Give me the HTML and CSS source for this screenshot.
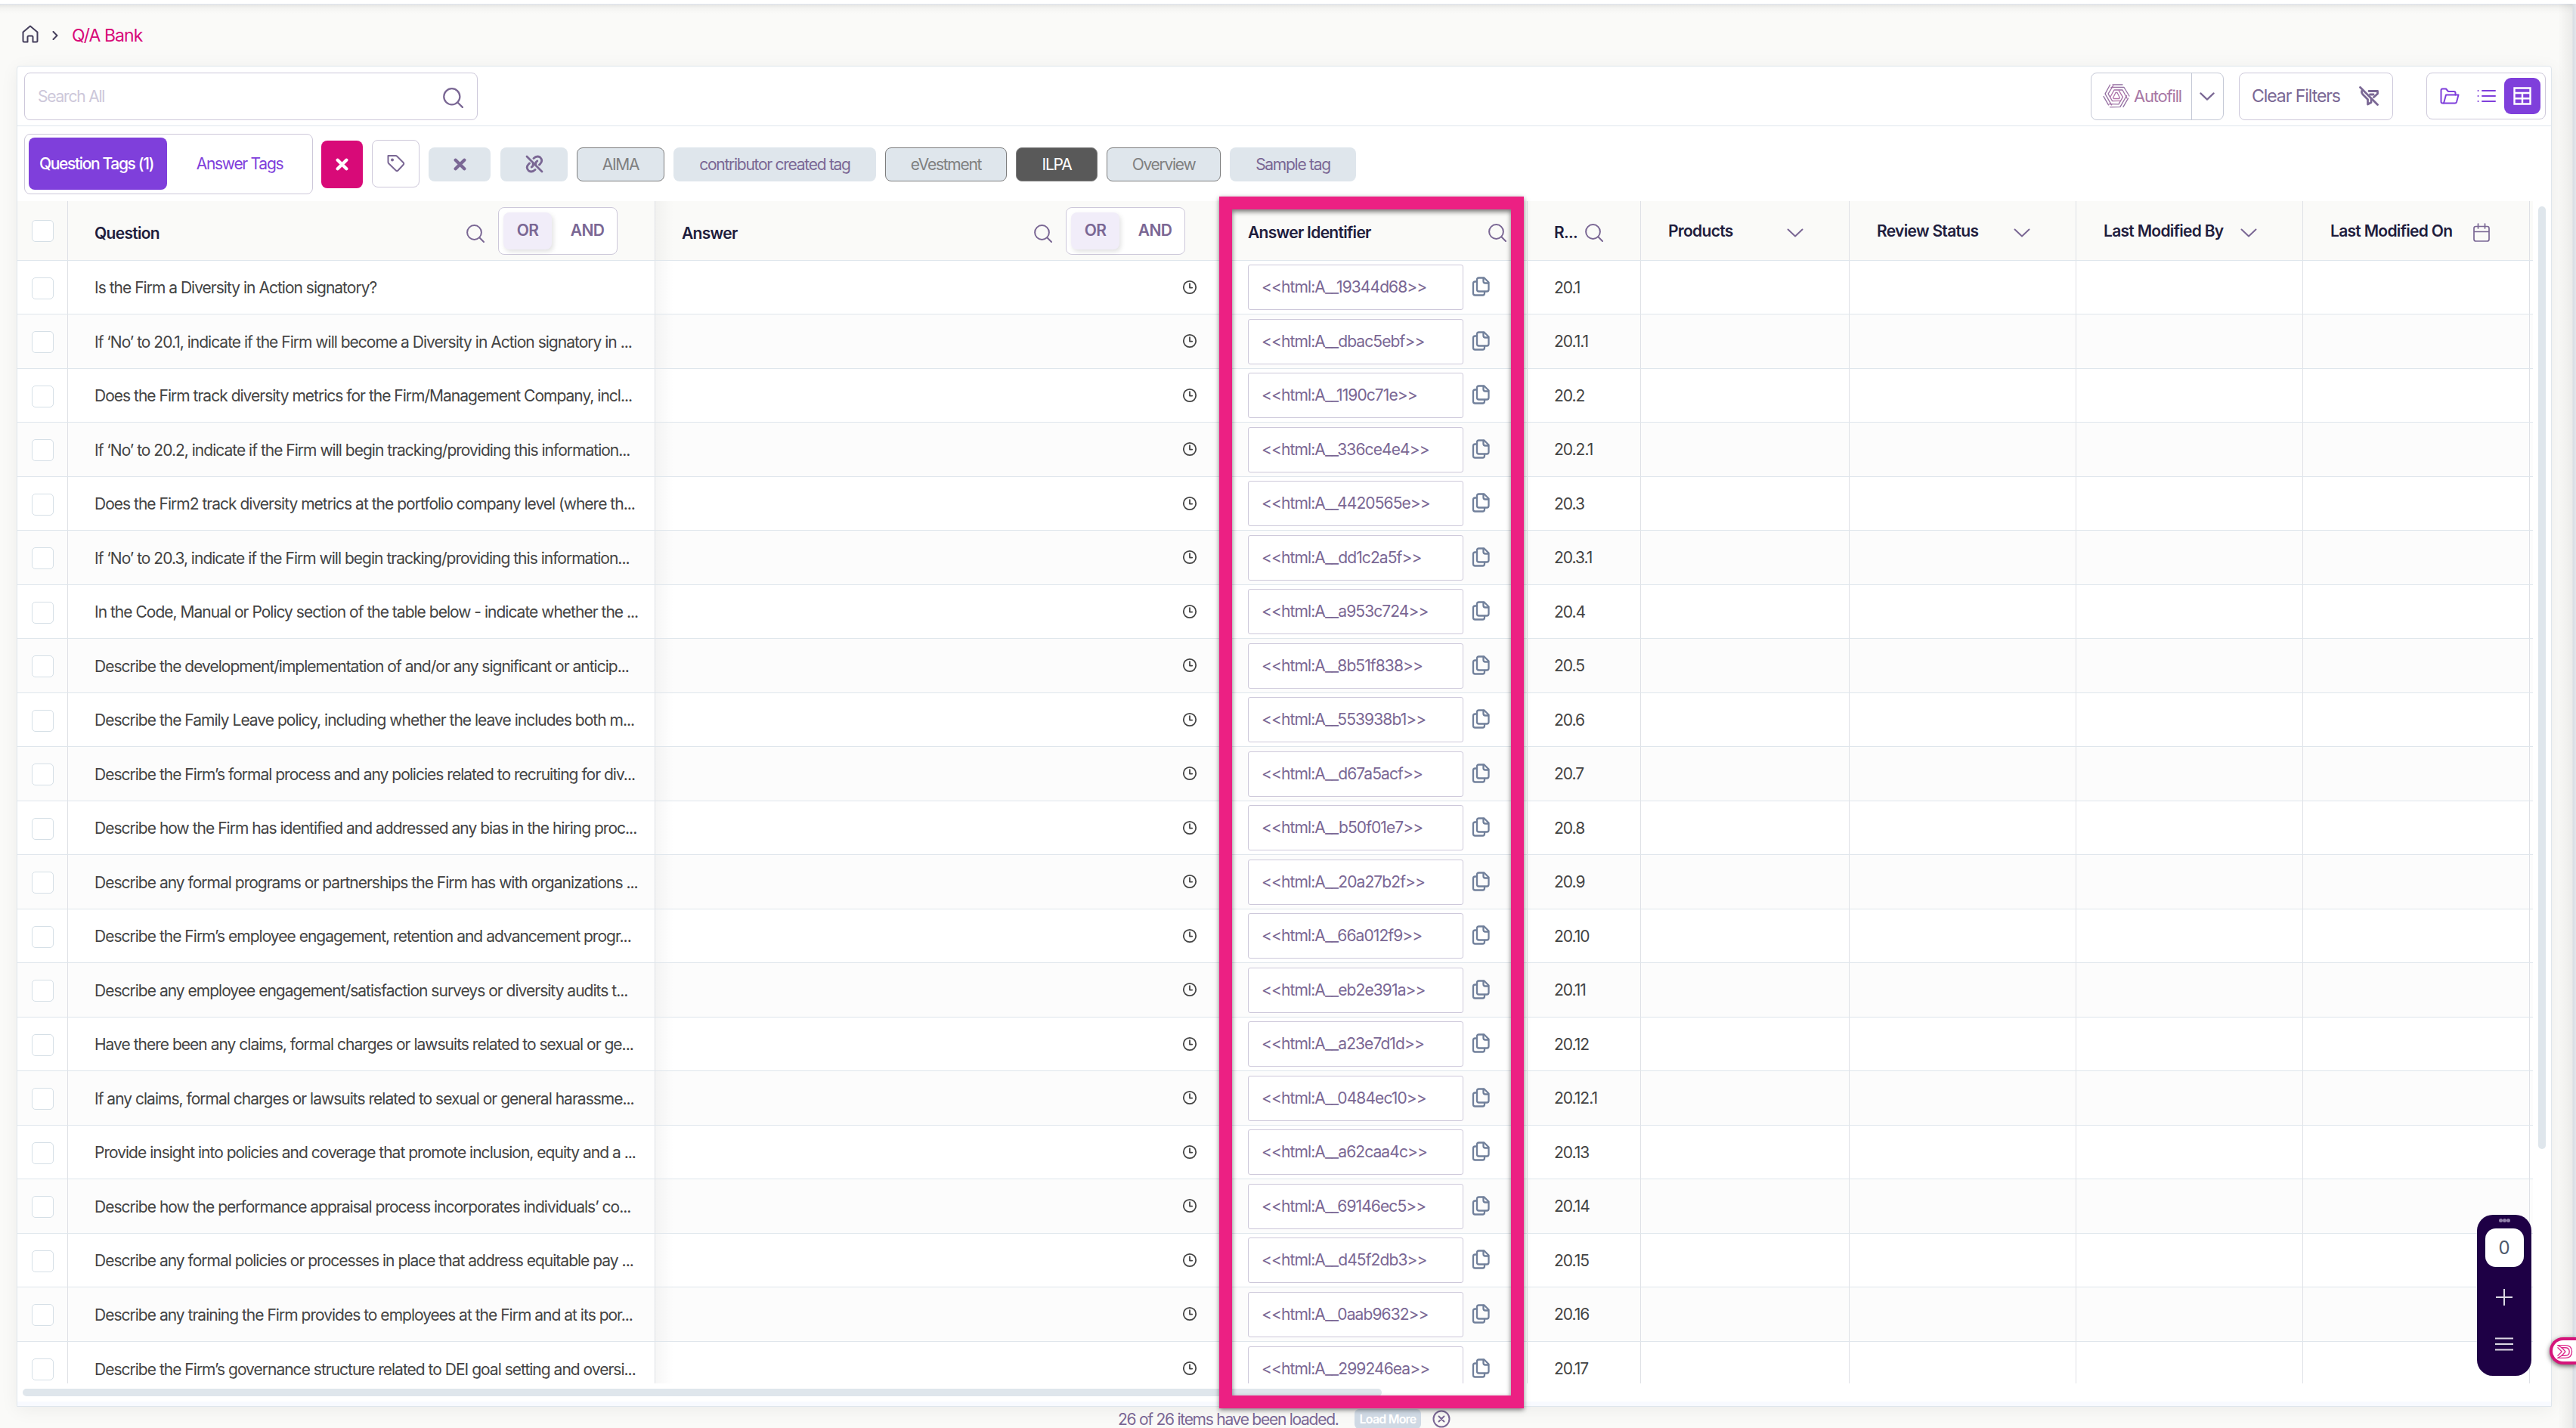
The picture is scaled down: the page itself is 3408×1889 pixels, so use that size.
FILE: index.html
```
<!DOCTYPE html>
<html lang="en">
<head>
  <meta charset="UTF-8" />
  <meta name="viewport" content="width=device-width, initial-scale=1.0"/>
  <title>Q/A Bank</title>
  <link rel="stylesheet" href="styles.css">
</head>
<body>
  <svg class="defs" width="0" height="0">
    <symbol id="search" viewBox="0 0 24 24"><circle cx="10.5" cy="10.5" r="9.4"/><path d="M17.3 17.3 L23 23"/></symbol>
    <symbol id="chevron" viewBox="0 0 22 12"><path d="M1.5 1.5 L11 10.5 L20.5 1.5"/></symbol>
    <symbol id="clock" viewBox="0 0 20 20"><circle cx="10" cy="10" r="8.2"/><path d="M10 5.2 V10.6 H13.2"/></symbol>
    <symbol id="copy" viewBox="0 0 24 26"><path d="M9.5 1.5 H16.5 L22.5 7.5 V17 Q22.5 19.5 20 19.5 H9.5 Q7 19.5 7 17 V4 Q7 1.5 9.5 1.5 Z"/><path d="M15.5 2 V6 Q15.5 8.5 18 8.5 H22"/><path d="M6.5 6.5 H4.5 Q2 6.5 2 9 V22 Q2 24.5 4.5 24.5 H14.5 Q17 24.5 17 22 V20"/></symbol>
  </svg>

  <nav class="breadcrumb">
    <svg class="home" viewBox="0 0 22 24"><path d="M1.5 9.5 L11 1.5 L20.5 9.5 V21 Q20.5 22.5 19 22.5 H14.5 V16 Q14.5 14.5 13 14.5 H9 Q7.5 14.5 7.5 16 V22.5 H3 Q1.5 22.5 1.5 21 Z"/></svg>
    <svg class="sep" viewBox="0 0 8 12"><path d="M1.5 1 L6.5 6 L1.5 11"/></svg>
    <span>Q/A Bank</span>
  </nav>

  <main class="panel">
    <div class="toolbar">
      <div class="search-box"><span>Search All</span><svg class="icon-search big"><use href="#search"/></svg></div>
      <div class="autofill">
        <div class="autofill-main">
          <svg class="spiral" viewBox="-18 -16 36 32">
            <defs>
              <linearGradient id="fade" gradientUnits="userSpaceOnUse" x1="-10" y1="15" x2="10" y2="-15"><stop offset="0" stop-color="#d274b2"/><stop offset="1" stop-color="#8a6f9f"/></linearGradient>
            </defs>
            <g stroke="url(#fade)">
              <path d="M-5 -15 H8 M-7 -11.5 H10 L17 0 M-8 1 L-3 -8 H8 L14 3"/>
              <path transform="rotate(120)" d="M-5 -15 H8 M-7 -11.5 H10 L17 0 M-8 1 L-3 -8 H8 L14 3"/>
              <path transform="rotate(240)" d="M-5 -15 H8 M-7 -11.5 H10 L17 0 M-8 1 L-3 -8 H8 L14 3"/>
              <path d="M-1 -4.5 H1 L4.5 2.5 L3.5 3.5 H-3.5 L-4.5 2.5 Z"/>
            </g>
          </svg>
          <span>Autofill</span>
        </div>
        <div class="autofill-more"><svg class="icon-chevron small"><use href="#chevron"/></svg></div>
      </div>
      <div class="clear-filters">
        <span>Clear Filters</span>
        <svg viewBox="0 0 26 26"><path d="M3.5 6.5 Q3 9 5 11 L11.5 17.5 V24 L16 21.5 V17"/><path d="M13 6.5 H24.5 V10 L19.5 14.500"/><path d="M14.500 11 H19"/><path d="M1.500 1.500 L24.500 24.500"/></svg>
      </div>
      <div class="views">
        <div class="view"><svg viewBox="0 0 26 22"><path d="M5 20.500 H3.500 Q1.500 20.500 1.500 18.500 V3.500 Q1.500 1.500 3.500 1.500 H8 L11 5 H18.500 Q20.500 5 20.500 7 V9.500"/><path d="M8 9.500 H24.500 L22 19 Q21.500 20.500 20 20.500 H5 Z"/></svg></div>
        <div class="view"><svg viewBox="0 0 26 22"><path d="M8 4 H25 M8 11 H25 M8 18 H25"/><path d="M2.500 4 H2.600 M2.500 11 H2.600 M2.500 18 H2.600"/></svg></div>
        <div class="view active"><svg viewBox="0 0 24 24"><path d="M1.500 1.500 H22.500 V22.500 H1.500 Z M1.500 8 H22.500 M1.500 15.200 H22.500 M12 8 V22"/></svg></div>
      </div>
    </div>

    <div class="tags">
      <div class="tag-tabs"><div class="tab on">Question Tags (1)</div><div class="tab">Answer Tags</div></div>
      <div class="clear-tags"><svg viewBox="0 0 16 16"><path d="M2.500 2.500 L13.500 13.500 M13.500 2.500 L2.500 13.500"/></svg></div>
      <div class="tag-button"><svg viewBox="0 0 24 24"><path d="M1.500 2 H11.500 Q12.500 2 13.500 3 L21.500 11 Q23 12.500 21.500 14 L14.500 21.500 Q13.200 22.800 11.800 21.500 L2.500 12.500 Q1.500 11.500 1.500 10.500 Z"/><circle cx="7" cy="7.500" r="1"/></svg></div>
      <div class="tag tag-x"><svg viewBox="0 0 16 16"><path d="M2.500 2.500 L13.500 13.500 M13.500 2.500 L2.500 13.500"/></svg></div>
      <div class="tag tag-unlink"><svg viewBox="0 0 24 24"><path d="M2 2 L22 22"/><path d="M11 4.500 Q15 0.500 19.500 3 Q24 7.500 19.500 12 L18.500 13"/><path d="M15.800 8 Q13 9.500 13.800 12.500"/><path d="M13 19.500 Q9 23.500 4.500 21 Q0 16.500 4.500 12 L5.500 11"/><path d="M8.200 16 Q11 14.500 10.200 11.500"/></svg></div>
      <div class="tag outlined aima">AIMA</div>
      <div class="tag contributor">contributor created tag</div>
      <div class="tag outlined evestment">eVestment</div>
      <div class="tag outlined selected">ILPA</div>
      <div class="tag outlined overview">Overview</div>
      <div class="tag sample">Sample tag</div>
    </div>

    <div class="table-area">
      <div class="table" id="table">
        <div class="row head">
          <div class="cell check"><i></i></div>
          <div class="cell question"><span>Question</span><svg class="icon-search"><use href="#search"/></svg><div class="toggle"><b class="on">OR</b><b>AND</b></div></div>
          <div class="cell answer"><span>Answer</span><svg class="icon-search"><use href="#search"/></svg><div class="toggle"><b class="on">OR</b><b>AND</b></div></div>
          <div class="cell identifier"><span>Answer Identifier</span><svg class="icon-search"><use href="#search"/></svg></div>
          <div class="cell ref"><span>R...</span><svg class="icon-search"><use href="#search"/></svg></div>
          <div class="cell filter"><span>Products</span><svg class="icon-chevron"><use href="#chevron"/></svg></div>
          <div class="cell filter"><span>Review Status</span><svg class="icon-chevron"><use href="#chevron"/></svg></div>
          <div class="cell filter"><span>Last Modified By</span><svg class="icon-chevron"><use href="#chevron"/></svg></div>
          <div class="cell filter date"><span>Last Modified On</span><svg class="calendar" viewBox="0 0 22 26"><path d="M3.500 4.500 H18.500 Q21 4.500 21 7 V21.500 Q21 24 18.500 24 H3.500 Q1 24 1 21.500 V7 Q1 4.500 3.500 4.500 Z M1 11.500 H21 M6.500 1 V7 M15.500 1 V7"/></svg></div>
          <div class="cell"></div>
        </div>
      </div>
      <div class="v-scroll"></div>
    </div>
    <div class="h-scroll"></div>
    <div class="panel-foot"></div>
  </main>

  <footer class="loaded">
    <span>26 of 26 items have been loaded.</span>
    <div class="load-more">Load More</div>
    <svg viewBox="0 0 24 24"><circle cx="12" cy="12" r="10.500"/><path d="M8.500 8.500 L15.500 15.500 M15.500 8.500 L8.500 15.500"/></svg>
  </footer>

  <div class="highlight"></div>
  <div class="page-edge"></div>

  <div class="dock">
    <div class="dots"><i></i><i></i><i></i></div>
    <div class="count">0</div>
    <svg class="plus" viewBox="0 0 22 22"><path d="M0 11 H22 M11 0 V22"/></svg>
    <svg class="menu" viewBox="0 0 26 18"><path d="M1 1.500 H25 M1 9 H25 M1 16.500 H25"/></svg>
  </div>
  <div class="side-tab"><svg viewBox="0 0 22 20"><path d="M1 1.200 H11 Q20.500 1.200 20.500 10 Q20.500 18.800 11 18.800 H1"/><path d="M6 4.500 H11 Q17 4.500 17 10 Q17 15.500 11 15.500 H6"/><path d="M1 1.200 L6.500 4.500 L11.500 10 L6.500 15.500 L1 18.800"/><path d="M1 4.500 L6.500 10 L1 15.500"/></svg></div>

  <script>
    const rows = [
      ["Is the Firm a Diversity in Action signatory?", "19344d68", "20.1"],
      ["If ‘No’ to 20.1, indicate if the Firm will become a Diversity in Action signatory in ...", "dbac5ebf", "20.1.1"],
      ["Does the Firm track diversity metrics for the Firm/Management Company, incl...", "1190c71e", "20.2"],
      ["If ‘No’ to 20.2, indicate if the Firm will begin tracking/providing this information...", "336ce4e4", "20.2.1"],
      ["Does the Firm2 track diversity metrics at the portfolio company level (where th...", "4420565e", "20.3"],
      ["If ‘No’ to 20.3, indicate if the Firm will begin tracking/providing this information...", "dd1c2a5f", "20.3.1"],
      ["In the Code, Manual or Policy section of the table below - indicate whether the ...", "a953c724", "20.4"],
      ["Describe the development/implementation of and/or any significant or anticip...", "8b51f838", "20.5"],
      ["Describe the Family Leave policy, including whether the leave includes both m...", "553938b1", "20.6"],
      ["Describe the Firm’s formal process and any policies related to recruiting for div...", "d67a5acf", "20.7"],
      ["Describe how the Firm has identified and addressed any bias in the hiring proc...", "b50f01e7", "20.8"],
      ["Describe any formal programs or partnerships the Firm has with organizations ...", "20a27b2f", "20.9"],
      ["Describe the Firm’s employee engagement, retention and advancement progr...", "66a012f9", "20.10"],
      ["Describe any employee engagement/satisfaction surveys or diversity audits t...", "eb2e391a", "20.11"],
      ["Have there been any claims, formal charges or lawsuits related to sexual or ge...", "a23e7d1d", "20.12"],
      ["If any claims, formal charges or lawsuits related to sexual or general harassme...", "0484ec10", "20.12.1"],
      ["Provide insight into policies and coverage that promote inclusion, equity and a ...", "a62caa4c", "20.13"],
      ["Describe how the performance appraisal process incorporates individuals’ co...", "69146ec5", "20.14"],
      ["Describe any formal policies or processes in place that address equitable pay ...", "d45f2db3", "20.15"],
      ["Describe any training the Firm provides to employees at the Firm and at its por...", "0aab9632", "20.16"],
      ["Describe the Firm’s governance structure related to DEI goal setting and oversi...", "299246ea", "20.17"]
    ];

    const table = document.getElementById("table");
    rows.forEach(([question, id, ref]) => {
      const row = document.createElement("div");
      row.className = "row";
      row.innerHTML = `
        <div class="cell check"><i></i></div>
        <div class="cell question"><span>${question}</span></div>
        <div class="cell answer"><svg class="icon-clock"><use href="#clock"/></svg></div>
        <div class="cell identifier"><div class="code">&lt;&lt;html:A__${id}&gt;&gt;</div><svg class="icon-copy"><use href="#copy"/></svg></div>
        <div class="cell ref">${ref}</div>
        <div class="cell"></div><div class="cell"></div><div class="cell"></div><div class="cell"></div><div class="cell"></div>`;
      table.appendChild(row);
    });
  </script>
</body>
</html>
```
FILE: styles.css
```
* {
  box-sizing: border-box;
}
body {
  margin: 0;
  height: 1889px;
  overflow: hidden;
  position: relative;
  display: flex;
  flex-direction: column;
  background: linear-gradient(#fff 0 5px, #dfe4ee 5px 6px, #e6e6e4 6px, #f4f4f2 11px, #fafaf8 18px);
  color: #444;
  font-family: Inter, "Liberation Sans", sans-serif;
  font-size: 21px;
  letter-spacing: -0.99px;
  font-variant-ligatures: none;
  white-space: nowrap;
}
svg {
  display: block;
  flex: none;
  fill: none;
  stroke: #7a6794;
  stroke-width: 2;
  stroke-linecap: round;
  stroke-linejoin: round;
}
.defs {
  position: absolute;
}
.breadcrumb {
  display: flex;
  align-items: center;
  height: 87px;
  padding: 7px 0 0 29px;
  color: #d80a78;
  font-size: 23px;
  letter-spacing: -0.95px;
}
.home {
  width: 22px;
  height: 24px;
  margin: 0 18px 3px 0;
  stroke: #453f5c;
}
.sep {
  width: 8px;
  height: 12px;
  margin: 1px 18px 0 0;
  stroke: #453f5c;
}

/* panel */
.panel {
  width: 3354px;
  height: 1775px;
  margin-left: 22px;
  display: flex;
  flex-direction: column;
  background: #fff;
  border: 1px solid #dfe6ec;
  border-radius: 4px 4px 0 0;
  box-shadow: 0 4px 24px rgba(0, 0, 0, 0.06);
}
.toolbar {
  display: flex;
  align-items: flex-start;
  height: 79px;
  padding: 8px 7px 0 9px;
  border-bottom: 1px solid #dfe6ec;
}
.toolbar > div {
  display: flex;
  align-items: center;
  height: 63px;
  border: 1px solid #cdc8da;
  border-radius: 8px;
}
.toolbar .search-box {
  width: 600px;
  justify-content: space-between;
  padding: 0 18px 0 17px;
  margin-right: auto;
  color: #cdc8da;
  letter-spacing: -1.2px;
}
.icon-search {
  width: 24px;
  height: 24px;
}
.icon-search.big {
  width: 27px;
  height: 27px;
  margin-top: 4px;
}
.toolbar .autofill {
  width: 176px;
  margin-right: 20px;
  border-color: #c5c9d6;
}
.autofill-main {
  display: flex;
  align-items: center;
  width: 133px;
  height: 100%;
  padding-left: 15px;
  border-right: 1px solid #c5c9d6;
  font-size: 22px;
  letter-spacing: -1.2px;
  color: #a878a6;
}
.spiral {
  width: 36px;
  height: 32px;
  margin-right: 5px;
  stroke-width: 1.3;
  overflow: visible;
}
.icon-chevron {
  width: 22px;
  height: 12px;
}
.icon-chevron.small {
  width: 20px;
  height: 11px;
  margin-left: 10px;
  stroke-width: 2.4;
}
.toolbar .clear-filters {
  width: 204px;
  margin-right: 44px;
  padding: 0 18px 0 16px;
  justify-content: space-between;
  color: #7a6794;
  font-size: 23px;
  letter-spacing: -1.05px;
}
.clear-filters svg {
  width: 26px;
  height: 26px;
  stroke-width: 2.8;
}
.toolbar .views {
  width: 158px;
  height: 62px;
  padding: 0 6px 0 5px;
  justify-content: space-between;
}
.view {
  display: grid;
  place-items: center;
  width: 48px;
  height: 48px;
  padding-left: 1px;
}
.view svg {
  width: 26px;
  height: 22px;
  stroke: #7f3fdb;
}
.view.active {
  padding: 0;
  background: #7f3fdb;
  border-radius: 9px;
}
.view.active svg {
  width: 24px;
  height: 24px;
  stroke: #fff;
  stroke-width: 2.4;
  stroke-linejoin: miter;
}

/* tags */
.tags {
  display: flex;
  align-items: center;
  height: 99px;
  padding: 2px 0 0 9px;
  letter-spacing: -1.27px;
}
.tag-tabs {
  display: flex;
  align-items: center;
  width: 382px;
  height: 80px;
  padding: 0 0 1px 5px;
  margin-right: 11px;
  border: 1px solid #cdc8da;
  border-radius: 8px;
}
.tab {
  display: grid;
  place-items: center;
  width: 192px;
  height: 69px;
  color: #7f3fdb;
}
.tab.on {
  width: 183px;
  background: #7f3fdb;
  border-radius: 8px;
  color: #fff;
  font-weight: 500;
  padding-right: 4px;
  letter-spacing: -1.35px;
}
.clear-tags {
  display: grid;
  place-items: center;
  width: 55px;
  height: 63px;
  margin-right: 12px;
  background: #d80a78;
  border-radius: 8px;
}
.clear-tags svg,
.tag-x svg {
  width: 17px;
  height: 17px;
  stroke-width: 4;
}
.clear-tags svg {
  stroke: #fff;
}
.tag-button {
  display: grid;
  place-items: center;
  width: 63px;
  height: 63px;
  margin: 0 12px 2px 0;
  border: 1px solid #cdc8da;
  border-radius: 8px;
}
.tag-button svg {
  width: 24px;
  height: 24px;
}
.tag {
  display: grid;
  place-items: center;
  height: 45px;
  margin: 0 12px 0 0;
  background: #dfe6ec;
  border-radius: 8px;
  color: #7a6794;
}
.tag-x {
  width: 82px;
  margin: 1px 13px 0 0;
}
.tag-unlink {
  width: 89px;
}
.tag-unlink svg {
  width: 24px;
  height: 24px;
  stroke-width: 2.8;
}
.outlined {
  border: 1px solid #7d7d7d;
  color: #808080;
}
.aima {
  width: 116px;
}
.contributor {
  width: 268px;
}
.evestment {
  width: 161px;
}
.selected {
  width: 108px;
  background: #595959;
  color: #fff;
}
.overview {
  width: 151px;
}
.sample {
  width: 167px;
}

/* table */
.table-area {
  display: flex;
  height: 1564px;
}
.table {
  width: 3328px;
  overflow: hidden;
}
.row {
  display: grid;
  grid-template-columns: 67px 777px 754px 400px 150px 276px 300px 300px 300px 4px;
  height: 71.5px;
  border-bottom: 1px solid #dfe6ec;
}
.row:nth-child(odd) {
  background: #fcfcfc;
}
.row:last-child {
  background: #fff;
  border: 0;
}
.row.head {
  height: 79px;
  background: #fafaf8;
  color: #1f1d3d;
  font-weight: 600;
  letter-spacing: -0.7px;
}
.cell {
  display: flex;
  align-items: center;
  min-width: 0;
  border-right: 1px solid #dfe1e6;
}
.cell:last-child {
  border: 0;
}
.check {
  padding: 2px 0 0 19px;
}
.check i {
  width: 29px;
  height: 29px;
  background: #fff;
  border: 1px solid #d5dfe6;
  border-radius: 5px;
}
.question {
  padding: 1px 49px 0 35px;
}
.answer {
  padding: 0 37px 0 35px;
  border: 0;
  background: linear-gradient(90deg, rgba(0, 0, 0, 0.035), transparent 24px) no-repeat;
}
.head .question,
.head .answer {
  padding-top: 2px;
}
.head .answer {
  padding-right: 53px;
}
.icon-clock {
  width: 20px;
  height: 20px;
  margin: 0 0 1px auto;
  stroke: #444;
  stroke-width: 1.8;
}
.identifier {
  padding: 0 27px 0 30px;
}
.code {
  width: 285px;
  height: 60px;
  margin-right: 11px;
  padding: 0 0 0 17px;
  line-height: 58px;
  background: #fff;
  border: 1px solid #cdc8da;
  border-radius: 3px;
  color: #7a6794;
  letter-spacing: -0.9px;
}
.icon-copy {
  width: 24px;
  height: 26px;
  margin-bottom: 2px;
  stroke: #71809b;
  stroke-width: 2.3;
}
.ref {
  padding-left: 35px;
}
.head .cell span {
  padding-top: 6px;
}
.head .question span,
.head .answer span {
  padding-top: 5px;
}
.head .icon-search {
  margin: 6px 0 0 auto;
}
.head .ref .icon-search {
  margin-left: 10px;
}
.head .filter {
  padding: 0 60px 0 36px;
}
.head .filter span {
  padding-top: 2px;
}
.head .icon-chevron {
  margin: 7px 0 0 auto;
}
.head .date {
  padding-right: 52px;
}
.calendar {
  width: 22px;
  height: 26px;
  margin: 6px 0 0 auto;
  stroke-width: 1.7;
}
.toggle {
  display: flex;
  align-items: center;
  width: 158px;
  height: 63px;
  margin-left: 18px;
  background: #fff;
  border: 1px solid #cdc8da;
  border-radius: 8px;
}
.toggle b {
  width: 86px;
  padding: 0 0 2px 8px;
  color: #7a6794;
  font-weight: 600;
  text-align: center;
}
.toggle .on {
  width: 64px;
  height: 49px;
  margin-left: 6px;
  padding: 0;
  line-height: 47px;
  background: #f1edf9;
  border-radius: 8px;
  box-shadow: 2px 3px 6px rgba(0, 0, 0, 0.12);
}
.v-scroll {
  width: 10px;
  height: 1247px;
  margin: 7px 0 0 7px;
  background: #dfe6ec;
  border-radius: 5px;
}
.h-scroll {
  width: 1798px;
  height: 10px;
  margin: 7px 0 7px 7px;
  background: #dfe6ec;
  border-radius: 5px;
}
.panel-foot {
  flex: 1;
  background: #f8faff;
}

/* footer */
.loaded {
  display: flex;
  align-items: center;
  height: 28px;
  padding: 4px 0 0 1479px;
  color: #7a6794;
  letter-spacing: -1.26px;
}
.loaded span {
  width: 313px;
}
.load-more {
  width: 88px;
  height: 26px;
  margin-right: 15px;
  background: #cfd9e4;
  border-radius: 6px;
  color: #fff;
  font-size: 16px;
  font-weight: 600;
  letter-spacing: -0.8px;
  line-height: 27px;
  text-align: center;
}
.loaded svg {
  width: 24px;
  height: 24px;
}

/* overlays */
.highlight {
  position: absolute;
  left: 1613px;
  top: 260px;
  width: 403px;
  height: 1603px;
  border: 17px solid #ec2083;
  box-shadow: 0 2px 6px rgba(0, 0, 0, 0.5), inset 0 3px 6px rgba(0, 0, 0, 0.55);
}
.page-edge {
  position: absolute;
  right: 0;
  top: 5px;
  bottom: 0;
  width: 24px;
  background: linear-gradient(90deg, transparent, rgba(0, 0, 0, 0.06) 19px, #d9dde4 20px, #e3e7ec);
}
.dock {
  position: absolute;
  left: 3277px;
  top: 1607px;
  width: 72px;
  height: 213px;
  display: flex;
  flex-direction: column;
  align-items: center;
  background: #1e0045;
  border-radius: 21px;
}
.dots {
  display: flex;
  margin-top: 5px;
}
.dots i {
  width: 5px;
  height: 5px;
  border-radius: 50%;
  background: #8f7fa8;
}
.count {
  width: 51px;
  height: 51px;
  margin-top: 8px;
  background: #fff;
  border-radius: 14px;
  color: #4e5a6b;
  font-size: 24px;
  letter-spacing: 0;
  line-height: 52px;
  text-align: center;
}
.dock svg {
  stroke: #ddd8e4;
  stroke-linecap: butt;
}
.plus {
  width: 22px;
  height: 22px;
  margin-top: 29px;
}
.menu {
  width: 26px;
  height: 18px;
  margin-top: 42px;
}
.side-tab {
  position: absolute;
  right: 0;
  top: 1769px;
  width: 35px;
  height: 36px;
  padding: 5px 0 0 6px;
  background: #fff;
  border: 4px solid #d5147a;
  border-right: 0;
  border-radius: 18px 0 0 18px;
  box-shadow: 0 2px 6px rgba(0, 0, 0, 0.6);
}
.side-tab svg {
  width: 21px;
  height: 20px;
  stroke: #dd2b8c;
  stroke-width: 1.4;
}
```
